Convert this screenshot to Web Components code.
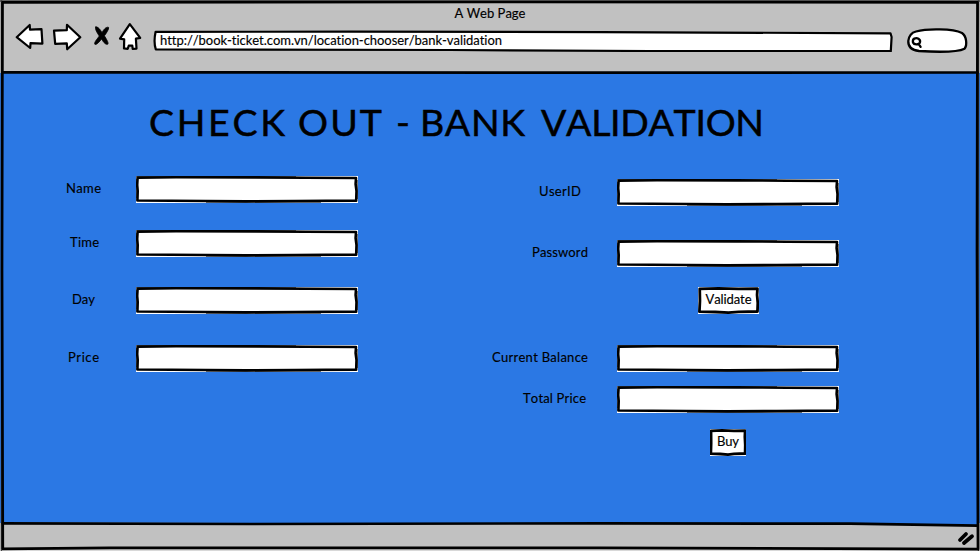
<!DOCTYPE html>
<html lang="en"><head><meta charset="utf-8"><title>A Web Page</title>
<style>
html,body{margin:0;width:980px;height:551px;overflow:hidden;background:#e8e8e8}
body{font:13px/16px Lato,"Open Sans",sans-serif;color:#000}
</style></head><body>
<browser-window>
<checkout-page></checkout-page>
</browser-window>
<script>
const define=(name,html,ready)=>customElements.define(name,class extends HTMLElement{
  connectedCallback(){
    const t=document.createElement('template');t.innerHTML=html;
    const r=this.attachShadow({mode:'open'});r.append(t.content.cloneNode(true));
    if(ready)ready(this,r);
  }
});

/* Text spread evenly over the given width. */
define('sketch-text',`<style>
:host{display:block;white-space:pre;font-kerning:none;font-variant-ligatures:none}
span{display:inline-block;-webkit-text-stroke:var(--ink,.15px) #000;stroke-linejoin:round}
</style><span><slot></slot></span>`,(host,r)=>{
  const w=+host.getAttribute('width'),s=r.querySelector('span');
  host.style.width=w+'px';
  const n=host.textContent.length;
  if(n>1)s.style.letterSpacing=(w-s.getBoundingClientRect().width)/(n-1)+'px';
});

define('text-field',`<style>:host{display:block;width:222px;height:27px}svg{display:block}</style>
<svg width="222" height="27"><path d="M0 0H222V27H0Z" fill="#fff"/><path d="M0 0H160V1H0ZM222 4V23H221V4ZM0 3V22H1V3ZM70 27V26H185V27Z" fill="#777"/>
<path d="M1.6 1.6 40 1.3 120 1.4 170 1.7 220 2 219.6 8 220.5 15 220.2 24.6 160 25 110 25.4 70 25 1.4 24.5 1.7 15 1.2 9Z" fill="#fff" stroke="#000" stroke-width="2.6" stroke-linejoin="round"/></svg>`);

define('sketch-button',`<style>:host{display:grid;place-items:center;position:relative;height:27px;box-sizing:border-box}
svg{position:absolute;inset:0;width:100%;height:100%}sketch-text{position:relative;margin-bottom:3px}</style>
<svg viewBox="0 0 60 27" preserveAspectRatio="none"><path d="M0 0H60V27H0Z" fill="#fff"/><path d="M1.7 1.8 20 1.4 40 1.8 58.5 1.7 58.1 8 58.8 16 58.5 24.5 40 24.8 30 25.6 17 25 1.4 24.7 1.9 14Z" fill="#fff" stroke="#000" stroke-width="2.8" stroke-linejoin="round" vector-effect="non-scaling-stroke"/></svg>
<sketch-text></sketch-text>`,(host,r)=>{
  const old=r.querySelector('sketch-text'),t=document.createElement('sketch-text');
  t.textContent=host.getAttribute('label');t.setAttribute('width',host.getAttribute('text-width'));old.replaceWith(t);
});

define('form-row',`<style>:host{display:flex;height:27px}
div{width:var(--label);flex:none;padding:4px 0 0 var(--indent);box-sizing:border-box}
</style><div><slot></slot></div><text-field></text-field>`);

define('checkout-page',`<style>
:host{display:block;height:450px;background:#2b78e4;padding-top:24px;box-sizing:border-box}
.title{display:flex;margin:0 0 0 149px;height:79px;font-size:37.5px;line-height:50px;font-weight:400}
.title sketch-text{--ink:.5px}
.cols{display:grid;grid-template-columns:480px 1fr}
.left{display:grid;grid-template-rows:54px 57px 58px 27px;--label:76px;padding-left:60px}
.right{display:flex;flex-direction:column;--label:137px;padding-top:3px}
</style>
<h1 class="title"><sketch-text width="136">CHECK</sketch-text> <sketch-text width="84" style="margin-left:13px">OUT</sketch-text> <sketch-text width="14" style="margin-left:14px">-</sketch-text> <sketch-text width="105" style="margin-left:10px">BANK</sketch-text> <sketch-text width="223" style="margin-left:16px">VALIDATION</sketch-text></h1>
<div class="cols"><div class="left">
<form-row style="--indent:6px"><sketch-text width="35">Name</sketch-text></form-row>
<form-row style="--indent:10px"><sketch-text width="29">Time</sketch-text></form-row>
<form-row style="--indent:12px"><sketch-text width="23">Day</sketch-text></form-row>
<form-row style="--indent:8px"><sketch-text width="31">Price</sketch-text></form-row>
</div><div class="right">
<form-row style="--indent:59px;margin-bottom:34px"><sketch-text width="42">UserID</sketch-text></form-row>
<form-row style="--indent:52px;margin-bottom:20px"><sketch-text width="56">Password</sketch-text></form-row>
<sketch-button label="Validate" text-width="46" style="width:61px;margin:0 0 31px 218px"></sketch-button>
<form-row style="--indent:12px;margin-bottom:14px"><sketch-text width="96">Current Balance</sketch-text></form-row>
<form-row style="--indent:43px;margin-bottom:16px"><sketch-text width="63">Total Price</sketch-text></form-row>
<sketch-button label="Buy" text-width="22" style="width:36px;margin-left:230px"></sketch-button>
</div></div>`);

define('nav-icons',`<style>:host{display:block}svg{display:block}</style>
<svg width="130" height="32" viewBox="14 21 130 32" fill="#fff" stroke="#000" stroke-width="2.2" stroke-linejoin="round" stroke-linecap="round">
<path d="M16.7 37.2 29.7 25 30 29.6 41.5 29.2 42.4 43.6 30.5 43.1 30.2 48Z"/>
<path d="M54 30.7 66.8 30.1 67 24.8 80.3 37.2 67.2 49.3 66.8 43.4 55.2 43.8Z"/>
<path d="M129.8 24.2 140.2 37.8 135.9 38.7 136.5 48.6 132.7 48.8 132.3 45.7 128.7 45.7 127.8 48.8 124 48.4 124.2 39.4 120 38.6Z"/>
<path d="M95.7 27C98 26 101 30.8 102 32.6 103 30.6 106 26.2 108.6 27.4 109.2 29.2 106 33.6 104.4 35.8 106 38.5 109 42.9 107.8 44.2 105 45 102.8 41 101.6 39 99.5 41.5 96.5 45.4 94.8 44.2 93.8 42.3 97.7 38.5 99.3 36 97.5 33.5 94.5 28.8 95.7 27Z" fill="#000" stroke-width=".8"/></svg>`);

define('address-bar',`<style>:host{display:grid;width:740px;height:22px}svg,sketch-text{grid-area:1/1}sketch-text{padding:2px 0 0 7px}</style>
<svg width="740" height="22" viewBox="153 30 740 22"><path d="M155.6 31.8 350 31.7 600 32.1 890.5 33.3 891.6 37 890.8 51.2 650 51 450 50 155.8 49.3C154 44 154.5 37 155.6 31.8Z" fill="#fff" stroke="#000" stroke-width="2.2" stroke-linejoin="round"/></svg>
<sketch-text width="342">http://book-ticket.com.vn/location-chooser/bank-validation</sketch-text>`);

define('search-box',`<style>:host{display:block}svg{display:block}</style>
<svg width="64" height="28" viewBox="906 27 64 28" fill="#fff" stroke="#000" stroke-width="2.3" stroke-linecap="round">
<path d="M916 31.5C927 28.5 953 28.6 962 33 966.5 36 967.5 45 964.5 48.7 957 52.5 942 52.4 919 51 911 50 908 46 908.3 41 909 35 912 32.5 916 31.5Z"/>
<path d="M914.3 38.6C917 37.4 920.8 38.8 920 42.3 919.3 44.8 914 45 913 42.5 912.6 40.5 913 39.2 914.3 38.6ZM918.6 43.9 920.6 46.8" fill="none"/></svg>`);

define('browser-window',`<style>
:host{display:grid;position:relative;width:980px;height:551px;grid-template:73px 450px 28px/100%;overflow:hidden}
header,footer{background:#c1c1c1}
header{display:grid;grid-template:24px 49px/100%}
.name{justify-self:center;padding:5px 0 0 0}
.bar{display:flex;align-items:flex-start}
nav-icons{margin:-3px 9px 0 14px}
address-bar{margin-top:6px}
search-box{margin:3px 0 0 13px}
.lines{position:absolute;inset:0;pointer-events:none}
</style>
<header><sketch-text class="name" width="71">A Web Page</sketch-text><div class="bar"><nav-icons></nav-icons><address-bar></address-bar><search-box></search-box></div></header>
<slot></slot><footer></footer>
<svg class="lines" width="980" height="551" fill="none" stroke="#000" stroke-width="2.7" stroke-linecap="round" stroke-linejoin="round">
<path d="M0 549.5H980V551H0Z" fill="#d8d8d8" stroke="none"/>
<path d="M1.5 0V551M0 1H980M978.5 0V551" stroke="#444" stroke-width="1.4"/>
<path d="M978 526 600 523.6 3 522.5V525L600 525 977 528Z" fill="#c1c1c1" stroke="none"/>
<path d="M600 523.3 850 523.7 977.5 525.7V522H600Z" fill="#2b78e4" stroke="none"/>
<path d="M2.5 2.3 500 2 977.5 2.3 977 250 978 549.2 600 547.8 110 547.8 2.8 548.8 2 270Z"/>
<path d="M2.8 72.3 500 72.6 977.5 72.5M2.8 523.4 250 524 600 523.3 850 523.7 977.5 525.7"/>
<path d="M960 540 966 534M964 543 972 536.3" stroke-width="3.8"/></svg>`);
</script></body></html>
